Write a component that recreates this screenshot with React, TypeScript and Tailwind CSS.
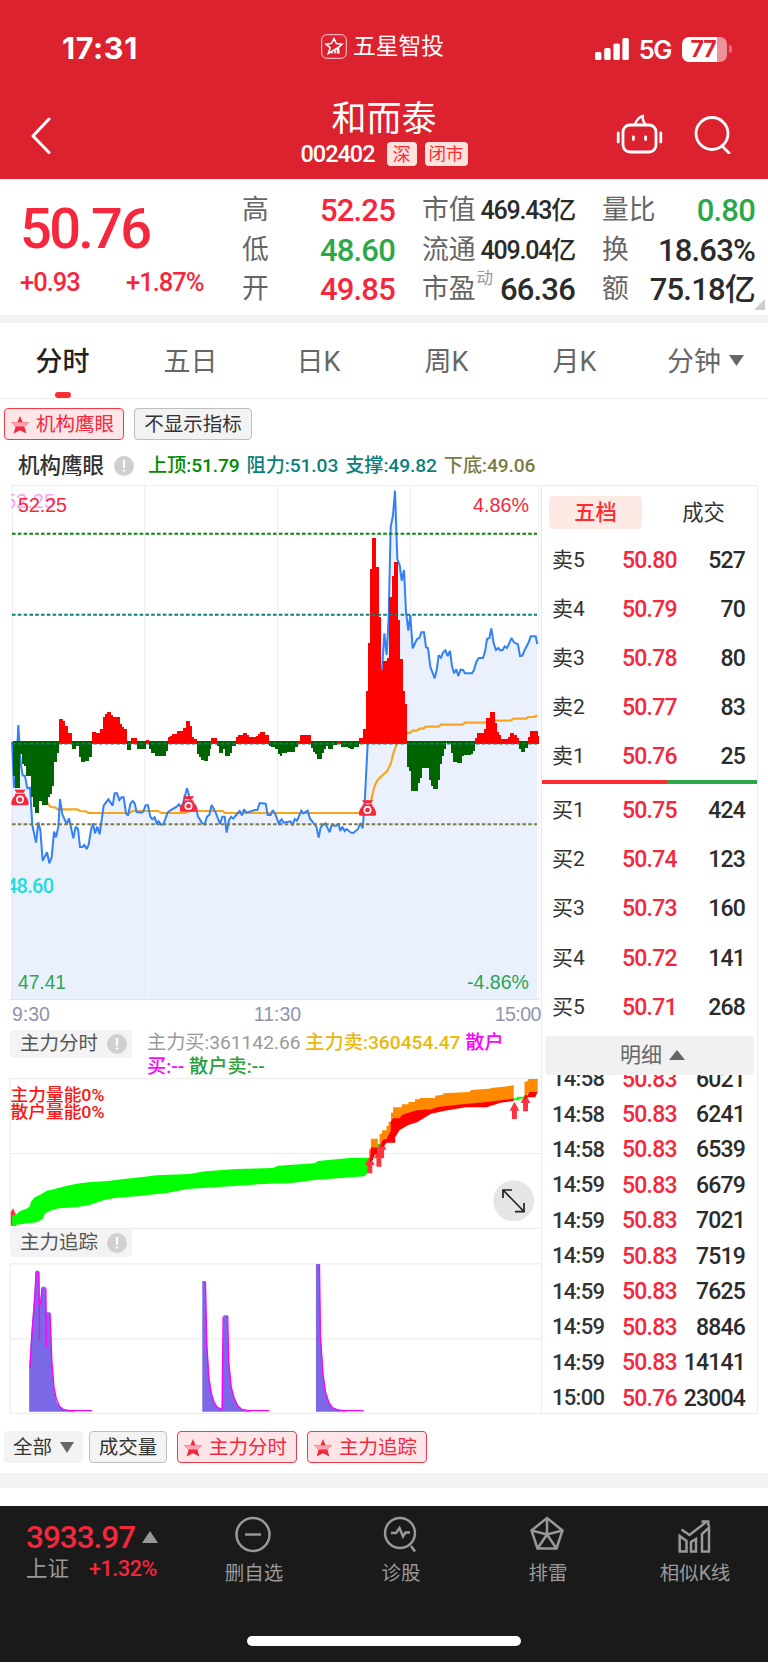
import { clsx } from "clsx";
import type { ReactNode } from "react";

type Quote = { label: string; value: string; tone: "up" | "down" | "flat"; small?: boolean; sup?: string };

const QUOTES: Quote[][] = [
  [
    { label: "高", value: "52.25", tone: "up" },
    { label: "低", value: "48.60", tone: "down" },
    { label: "开", value: "49.85", tone: "up" },
  ],
  [
    { label: "市值", value: "469.43亿", tone: "flat", small: true },
    { label: "流通", value: "409.04亿", tone: "flat", small: true },
    { label: "市盈", value: "66.36", tone: "flat", sup: "动" },
  ],
  [
    { label: "量比", value: "0.80", tone: "down" },
    { label: "换", value: "18.63%", tone: "flat" },
    { label: "额", value: "75.18亿", tone: "flat" },
  ],
];

const TABS = ["分时", "五日", "日K", "周K", "月K"];

const ASKS = [
  ["卖5", "50.80", "527"],
  ["卖4", "50.79", "70"],
  ["卖3", "50.78", "80"],
  ["卖2", "50.77", "83"],
  ["卖1", "50.76", "25"],
];

const BIDS = [
  ["买1", "50.75", "424"],
  ["买2", "50.74", "123"],
  ["买3", "50.73", "160"],
  ["买4", "50.72", "141"],
  ["买5", "50.71", "268"],
];

const TRADES = [
  ["14:58", "50.83", "6021"],
  ["14:58", "50.83", "6241"],
  ["14:58", "50.83", "6539"],
  ["14:59", "50.83", "6679"],
  ["14:59", "50.83", "7021"],
  ["14:59", "50.83", "7519"],
  ["14:59", "50.83", "7625"],
  ["14:59", "50.83", "8846"],
  ["14:59", "50.83", "14141"],
  ["15:00", "50.76", "23004"],
];

// Morning and afternoon halves are plotted at 3x. Each bar is [x, y], running
// to the x of the next one; y equal to the base means no bar.
const AM_BASE = 369;
const AM_BARS: [number, number][] = [
  [38, 468], [46, 503], [59, 402], [65, 432], [72, 438], [79, 468], [92, 530], [98, 560], [105, 580],
  [118, 542], [125, 555], [144, 530], [151, 521], [157, 499], [163, 427], [170, 398], [177, 297],
  [190, 302], [196, 317], [203, 338], [216, 388], [229, 379], [236, 412], [242, 427], [255, 424],
  [268, 412], [275, 336], [288, 338], [301, 327], [308, 291], [315, 281], [321, 275], [334, 286],
  [340, 291], [360, 313], [367, 320], [373, 327], [380, 390], [393, 354], [412, 388], [439, 361],
  [446, 387], [452, 399], [465, 408], [498, 393], [505, 352], [511, 348], [517, 343], [524, 341],
  [531, 333], [550, 324], [557, 304], [570, 318], [577, 350], [583, 356], [590, 401], [596, 412],
  [603, 421], [613, 424], [623, 408], [629, 387], [634, 355], [650, 379], [656, 398], [669, 388],
  [676, 408], [689, 399], [695, 379], [709, 352], [715, 345], [728, 339], [741, 345], [748, 352],
  [768, 347], [774, 343], [781, 336], [794, 344], [806, 379], [813, 382], [826, 388], [833, 402],
  [839, 408], [843, 408],
];

const PM_BASE = 819;
const PM_BARS: [number, number][] = [
  [0, 858], [6, 850], [20, 845], [46, 830], [54, 812], [60, 795], [92, 833], [98, 845], [105, 852],
  [112, 866], [125, 848], [131, 838], [138, 827], [144, 838], [158, 825], [170, 812], [183, 832],
  [203, 835], [209, 838], [223, 832], [236, 803], [249, 776], [257, 663], [263, 520], [269, 297],
  [276, 204], [289, 291], [296, 441], [302, 600], [309, 572], [322, 563], [328, 380], [335, 317],
  [341, 275], [355, 450], [361, 566], [368, 664], [374, 703], [381, 892], [388, 903], [394, 962],
  [400, 964], [413, 940], [420, 924], [427, 895], [446, 930], [453, 948], [459, 957], [473, 930],
  [479, 883], [486, 858], [492, 838], [499, 819], [513, 848], [519, 875], [532, 878], [545, 857],
  [552, 855], [572, 851], [578, 843], [585, 805], [592, 789], [612, 778], [618, 743], [631, 726],
  [644, 758], [651, 787], [658, 795], [664, 806], [683, 801], [690, 788], [703, 795], [710, 804],
  [716, 838], [722, 846], [736, 833], [743, 800], [749, 784], [775, 797], [778, 797],
];

const AM_PRICE =
  "36,365 42,500 46,500 55,315 62,430 68,466 75,468 82,505 90,503 97,615 108,668 115,607 121,630 128,722 141,697 148,730 155,712 162,635 168,652 175,620 180,537 187,583 200,612 207,595 220,655 227,620 234,627 240,681 247,681 253,675 260,687 266,674 273,630 279,610 285,640 292,620 299,643 311,557 325,538 338,557 344,520 351,520 358,540 365,532 371,532 378,580 384,587 391,552 398,543 404,550 410,576 424,578 430,574 437,556 444,556 451,590 457,598 464,592 470,610 476,604 483,614 490,613 503,578 510,572 530,560 537,553 545,565 561,505 568,530 576,550 588,562 594,590 607,610 614,613 621,590 628,585 635,555 648,580 660,612 667,590 674,590 680,638 687,600 693,590 700,596 706,588 719,573 726,586 732,568 739,578 765,570 772,570 779,549 797,551 803,585 812,585 818,570 825,580 838,615 840,602";
const PM_PRICE =
  "0,1052 5,1048 10,1058 32,1054 38,1066 44,1047 51,1052 64,1022 70,1030 83,1022 90,1046 103,1062 109,1070 116,1103 122,1072 129,1065 136,1060 149,1087 155,1065 168,1068 175,1060 181,1083 187,1070 194,1083 200,1077 213,1088 220,1089 234,1077 241,1059 248,1075 254,1000 263,820 275,700 300,620 306,600 313,490 320,555 326,440 332,172 339,135 345,62 352,268 359,285 365,332 372,300 378,425 385,482 391,435 398,535 404,522 411,507 418,504 424,487 432,487 438,532 444,534 451,590 464,625 470,600 476,556 483,563 489,548 496,541 503,558 510,543 516,588 522,610 529,598 535,618 542,599 549,600 555,610 576,610 582,600 589,576 596,564 609,564 615,545 621,507 628,504 634,475 641,520 648,540 655,534 661,541 668,540 674,529 681,534 687,522 694,504 702,517 714,523 720,558 727,557 734,540 746,517 752,499 767,499 772,522";

function Bars({ bars, base }: { bars: [number, number][]; base: number }) {
  return (
    <g shapeRendering="crispEdges">
      {bars.slice(0, -1).map(([x, y], i) => {
        const w = bars[i + 1][0] - x;
        return y < base ? (
          <rect key={x} x={x} y={y} width={w} height={base - y + 2} fill="#ff0000" />
        ) : (
          <rect key={x} x={x} y={base - 5} width={w} height={Math.max(y - base, 0) + 5} fill="#006400" />
        );
      })}
    </g>
  );
}

function MoneyBag({ x, y }: { x: number; y: number }) {
  return (
    <g transform={`translate(${x} ${y})`}>
      <path d="M-5.5-8.8Q-3-7.6 0-8.6Q3-7.6 5.5-8.8L3.6-5.2H-3.6Z" fill="#f5273d" />
      <path d="M-5-4.2H5V-2.6H-5Z" fill="#f5273d" />
      <path d="M-4.4-3H4.4C7.4-.6 8.6 2.4 8.7 5.4Q8.7 7.3 6.8 7.3H-6.8Q-8.7 7.3-8.7 5.4C-8.6 2.4-7.4-.6-4.4-3Z" fill="#f5273d" />
      <circle cy="1.6" r="3.2" fill="#f5273d" stroke="#fff" strokeWidth="1.6" />
    </g>
  );
}

function PriceChart() {
  return (
    <svg width="542" height="515" viewBox="0 485 542 515" className="block" fontFamily="Liberation Sans, Arial, sans-serif">
      <defs>
        <clipPath id="plot">
          <rect x="11" y="485" width="529" height="515" />
        </clipPath>
      </defs>
      <g clipPath="url(#plot)">
        <g transform="translate(0 620) scale(.33333)">
          <polygon points={`30,365 ${AM_PRICE} 840,1139 30,1139`} fill="#eaf1fd" />
        </g>
        <g transform="translate(280 470) scale(.33333)">
          <polygon points={`0,1589 ${PM_PRICE} 772,1589`} fill="#eaf1fd" />
        </g>
      </g>
      <path d="M12.5 485.5H539M144.7 485V999.5M277.5 485V999.5M410.5 485V999.5M539 485V999.5M12.5 485V999.5" stroke="#e3e8f5" strokeOpacity=".75" fill="none" />
      <path d="M10 999.5H539" stroke="#dde5f5" />
      <g fontSize="20">
        <text x="10" y="508" fill="#f9a3f5" clipPath="url(#plot)" dx="-5">52.25</text>
        <text x="18" y="512" fill="#f5273d" textLength="49" lengthAdjust="spacingAndGlyphs">52.25</text>
        <text x="473" y="512" fill="#f5273d" textLength="56" lengthAdjust="spacingAndGlyphs">4.86%</text>
        <text x="18" y="988.5" fill="#2ba455" textLength="48" lengthAdjust="spacingAndGlyphs">47.41</text>
        <text x="467" y="988.5" fill="#2ba455" textLength="62" lengthAdjust="spacingAndGlyphs">-4.86%</text>
      </g>
      <text x="6" y="893" fontSize="20" fill="#1fdce0" fontFamily="Roboto" fontWeight="500" clipPath="url(#plot)" textLength="48">48.60</text>
      <g clipPath="url(#plot)" fill="none" strokeLinejoin="round">
        <g transform="translate(0 620) scale(.33333)">
          <polyline points="140,545 147,555 153,561 166,562 173,568 232,568 240,573 258,574 266,579 390,579 397,573 475,573 483,579 555,579 570,573 668,573 675,579 842,579" stroke="#f9a41c" strokeWidth="6.5" />
          <polyline points={AM_PRICE} stroke="#3480f5" strokeWidth="6" strokeLinejoin="miter" strokeMiterlimit="2" />
          <Bars bars={AM_BARS} base={AM_BASE} />
        </g>
        <g transform="translate(280 470) scale(.33333)">
          <polyline points="0,1029 262,1029 272,1000 278,970 285,945 293,930 305,918 320,905 332,882 340,850 350,822 365,795 381,790 391,788 398,782 412,781 418,776 430,776 437,770 476,770 483,764 548,764 555,758 612,758 640,752 692,752 700,746 738,746 745,741 762,741 772,736" stroke="#f9a41c" strokeWidth="6.5" />
          <polyline points={PM_PRICE} stroke="#3480f5" strokeWidth="6" strokeLinejoin="miter" strokeMiterlimit="2" />
          <Bars bars={PM_BARS} base={PM_BASE} />
        </g>
        <g strokeWidth="2" strokeDasharray="3.6 2.2">
          <path d="M12 533.7H537" stroke="#008a00" />
          <path d="M12 614.7H537" stroke="#0d7f7b" />
          <path d="M12 743.8H537" stroke="#0d7f7b" strokeWidth="1.6" />
          <path d="M12 824.3H537" stroke="#7c7a45" />
        </g>
        <MoneyBag x={20} y={798} />
        <MoneyBag x={188.5} y={804.5} />
        <MoneyBag x={367.5} y={808.5} />
      </g>
    </svg>
  );
}

function UpArrow({ x, y }: { x: number; y: number }) {
  return <path transform={`translate(${x} ${y})`} d="M0 0L14 27H7V52H-7V27H-14Z" fill="#ff3340" />;
}

function FlowChart() {
  return (
    <svg width="542" height="151" viewBox="0 1078 542 151" className="block">
      <path d="M10 1078.7H541M10 1153.5H541M10 1228.3H541M10.2 1078V1229" stroke="#ededed" strokeWidth="1.2" />
      <g transform="translate(0 1060) scale(.34758 .33333)">
        <path d="M31 455L38 445L46 465V497H31Z" fill="#ff3340" />
        <polygon
          points="35,467 45,465 50,460 60,452 75,447 85,440 90,424 100,412 118,403 135,392 155,388 170,383 190,378 220,371 255,367 310,363 350,358 410,351 450,346 545,342 590,334 680,327 785,324 800,317 905,310 915,303 1005,294 1064,293 1064,318 1058,340 1048,349 990,353 900,361 840,369 740,373 620,382 540,387 480,399 400,408 330,414 300,420 260,434 220,442 170,445 150,450 130,460 122,478 105,487 80,490 48,494 46,498 35,498"
          fill="#00ff00"
        />
        <UpArrow x={1064} y={288} />
        <polygon points="1062,268 1067,268 1067,236 1087,236 1087,262 1067,262 1067,296 1062,296" fill="#ff8a00" />
        <polygon points="1067,262 1087,262 1087,280 1078,285 1073,300 1064,305" fill="#ff0000" />
        <rect x="1086" y="252" width="9" height="14" fill="#00ff00" />
        <UpArrow x={1090} y={268} />
        <UpArrow x={1098} y={242} />
        <polygon
          points="1092,255 1092,222 1099,222 1099,211 1112,211 1112,198 1118,198 1118,185 1125,185 1125,158 1131,158 1131,142 1156,142 1156,133 1175,133 1175,126 1194,126 1194,118 1207,118 1207,114 1252,114 1252,107 1275,104 1275,100 1350,96 1356,90 1406,86 1418,83 1450,80 1478,76 1478,115 1440,122 1330,134 1240,148 1200,155 1156,168 1150,176 1130,178 1130,200 1118,228 1108,240 1100,240"
          fill="#ff8a00"
        />
        <polygon
          points="1095,262 1100,240 1112,236 1124,212 1124,185 1131,175 1150,175 1156,165 1175,158 1200,151 1240,148 1260,141 1330,133 1400,126 1440,121 1478,115 1478,123 1440,128 1400,142 1340,142 1280,152 1240,161 1200,187 1175,195 1150,210 1137,232 1137,248 1112,248 1105,258"
          fill="#ff0000"
        />
        <path d="M1478 118H1490V113H1510" stroke="#00ff00" strokeWidth="6" fill="none" />
        <UpArrow x={1480} y={125} />
        <UpArrow x={1512} y={102} />
        <polygon points="1509,106 1509,66 1520,62 1520,57 1547,57 1547,95 1522,95 1515,106" fill="#ff8a00" />
        <polygon points="1522,95 1547,95 1540,112 1515,112 1509,122 1509,106 1518,106" fill="#ff0000" />
      </g>
      <g fontFamily="Roboto, Noto Sans CJK SC, sans-serif" fontSize="17.4" fill="#ff1414" fontWeight="500">
        <text x="10.5" y="1101" textLength="94" lengthAdjust="spacingAndGlyphs">主力量能0%</text>
        <text x="10.5" y="1117.5" textLength="94" lengthAdjust="spacingAndGlyphs">散户量能0%</text>
      </g>
      <circle cx="513.7" cy="1200.7" r="20.5" fill="#e6e6e6" />
      <path d="M503 1190L524 1211.5M503 1198V1190H512M515 1211.7H524V1203" stroke="#222" strokeWidth="1.7" fill="none" />
    </svg>
  );
}

function TrackChart() {
  return (
    <svg width="542" height="151" viewBox="0 1263 542 151" className="block">
      <path d="M10 1263.8H541M10 1338.8H541M10 1413.4H541M10.2 1263V1414" stroke="#ededed" strokeWidth="1.2" />
      <g transform="translate(0 1225) scale(.34758 .33333)">
        <g fill="#7a68e6">
          <polygon points="84,560 84,430 90,325 98,220 103,137 112,137 115,240 120,185 131,185 134,262 144,262 149,405 155,485 162,530 172,545 182,553 215,557 215,560" />
          <polygon points="582,560 582,168 591,168 596,360 602,460 609,505 616,530 625,545 638,553 643,271 655,271 658,410 666,485 674,515 684,540 695,552 720,557 720,560" />
          <polygon points="909,560 909,117 919,117 923,335 930,445 937,500 946,530 956,547 970,554 995,557 995,560" />
        </g>
        <g fill="none" stroke="#ff00ff" strokeWidth="4">
          <path d="M86 430L92 325L100 218L104 140M112 140L114 345M116 240L121 190M132 190L133 367M144 264L149 405L155 485L162 522L172 545L182 553L200 557H265" />
          <path d="M591 170L595 360L601 460L608 505L616 532L625 547L639 553L642 275M655 273L658 410L665 485L673 518L684 543L695 553L715 557H775" />
          <path d="M919 118L922 335L929 445L936 500L946 532L956 548L970 554L990 557H1046" />
        </g>
      </g>
    </svg>
  );
}

function Star() {
  return (
    <svg width="18" height="18" viewBox="0 0 18 18">
      <path d="M9 0L11.6 6.2H18L13.4 10.8L15.4 17.5L9 14.2L2.6 17.5L4.6 10.8L0 6.2H6.4Z" fill="#f5273d" />
      <path d="M0 6.2H18L13.6 10.6H4.4Z" fill="#fda4ad" />
    </svg>
  );
}

function Info() {
  return (
    <span className="flex size-5 shrink-0 items-center justify-center rounded-full bg-[#d0d0d0]">
      <svg width="4" height="12" viewBox="0 0 4 12" fill="#fff">
        <path d="M.8 0H3.2L2.8 8H1.2Z" />
        <circle cx="2" cy="10.6" r="1.2" />
      </svg>
    </span>
  );
}

function Chip({ children, active, className }: { children: ReactNode; active?: boolean; className?: string }) {
  return (
    <div
      className={clsx(
        "flex h-8 items-center rounded border pt-px text-[19.5px] leading-none whitespace-nowrap",
        active ? "border-[#f5394a] bg-[#fee5e8] pl-[6px] text-[#f5273d]" : "justify-center border-[#bfbfbf] bg-[#f3f3f3] text-[#333]",
        className,
      )}
    >
      {active && <Star />}
      <span className={active ? "ml-[7px]" : ""}>{children}</span>
    </div>
  );
}

function PanelLabel({ children }: { children: string }) {
  return (
    <div className="ml-[10px] flex h-[28px] w-[122px] shrink-0 items-center gap-[9px] rounded bg-[#f3f3f3] pl-[10px] text-[19.5px] leading-none text-[#555]">
      {children}
      <Info />
    </div>
  );
}

function BookRow({ row, timed, className }: { row: string[]; timed?: boolean; className: string }) {
  return (
    <div className={clsx("flex shrink-0 items-center pr-[12px] pl-[10px] text-[23px] leading-none font-medium tracking-[-0.8px]", className)}>
      <span className={clsx("w-[70px] text-[#333]", timed ? "text-[22px] tracking-[-0.7px]" : "text-[21px] font-normal tracking-[-0.1px]")}>
        {row[0]}
      </span>
      <span className="text-[#f5273d]">{row[1]}</span>
      <span className="flex-1 text-right text-[#2b2b2b]">{row[2]}</span>
    </div>
  );
}

function NavItem({ label, children }: { label: string; children: ReactNode }) {
  return (
    <div className="flex w-[147px] flex-col items-center pt-[8px]">
      <svg width="40" height="40" viewBox="0 0 40 40" fill="none" stroke="#999" strokeWidth="2.5">
        {children}
      </svg>
      <span className="mt-[10px] ml-[3px] text-[19.5px] leading-none text-[#999]">{label}</span>
    </div>
  );
}

export default function App() {
  return (
    <div className="flex h-[1663px] w-[768px] flex-col overflow-hidden bg-white font-['Roboto','Noto_Sans_CJK_SC',sans-serif]">
      {/* Status bar + title */}
      <header className="h-[179px] shrink-0 bg-[#dc222f] text-white">
        <div className="grid h-24 grid-cols-[1fr_auto_1fr] items-center">
          <span className="pt-px pl-[62px] font-['Inter',sans-serif] text-[30.5px] leading-none font-bold tracking-[0.6px]">17:31</span>
          <div className="flex items-center gap-[6px] pr-[3px] pb-[3px]">
            <svg width="26" height="25" viewBox="0 0 26 25" fill="none" stroke="#fff">
              <rect x=".7" y=".7" width="24.6" height="23.6" rx="5" strokeWidth="1" strokeOpacity=".8" />
              <path d="M10.4 9.6L13 4.5L15.4 9.6L21 10.2L17.3 13.6L18 19.5M10.4 9.6L5 10.2L9.2 13.8L7.3 19.5L18.5 12.6M11 19.5V17M14 19.5V15.5M16.5 19.5V14.5" strokeWidth="1.5" />
            </svg>
            <span className="pt-px text-[22.8px] leading-none">五星智投</span>
          </div>
          <div className="flex items-center justify-end pt-[2px] pr-[36px]">
            <svg width="34" height="23" viewBox="0 0 34 23" fill="#fff">
              <rect y="14" width="6.4" height="8" rx="1.6" />
              <rect x="9.2" y="10" width="6.4" height="12" rx="1.6" />
              <rect x="18.4" y="5.5" width="6.4" height="16.5" rx="1.6" />
              <rect x="27.4" width="6.4" height="22" rx="1.6" />
            </svg>
            <span className="ml-[10px] pt-px font-['Inter',sans-serif] text-[25.5px] leading-none font-semibold tracking-[-1.4px]">5G</span>
            <div className="ml-[11px] flex h-[25px] w-[45px] items-center justify-center rounded-[7px] bg-[linear-gradient(to_right,#fff_78%,#ee919a_78%)]">
              <span className="pr-[3px] font-['Inter',sans-serif] text-[23px] leading-none font-bold tracking-[-1px] text-[#dc222f]">77</span>
            </div>
            <div className="ml-[2px] h-2 w-[3px] rounded-r bg-[#e8717b]" />
          </div>
        </div>
        <div className="grid h-[83px] grid-cols-[1fr_auto_1fr] items-start">
          <svg width="22" height="38" viewBox="0 0 22 38" className="mt-[21px] ml-[30px]" fill="none" stroke="#fff" strokeWidth="3" strokeLinecap="round" strokeLinejoin="round">
            <path d="M19 2L3 19L19 35.5" />
          </svg>
          <div className="flex flex-col items-center">
            <h1 className="mt-[6px] text-[35px] leading-[36px]">和而泰</h1>
            <div className="mt-[4px] flex h-6 items-center">
              <span className="pt-[2px] text-[23.5px] leading-none font-medium tracking-[-1px]">002402</span>
              <span className="ml-[12px] flex h-6 w-[30px] items-center justify-center rounded bg-[#ffe3dc] pt-px text-[18px] leading-none text-[#fb2d33]">深</span>
              <span className="ml-2 flex h-6 w-[43px] items-center justify-center rounded bg-[#ffe3dc] pt-px text-[17.5px] leading-none text-[#fb2d33]">闭市</span>
            </div>
          </div>
          <div className="mt-[18px] flex justify-end gap-[31px] pr-[37px]">
            <svg width="47" height="41" viewBox="0 0 47 41" fill="none" stroke="#fff" strokeWidth="2.8" strokeLinecap="round">
              <rect x="7" y="11" width="33" height="27" rx="7" />
              <path d="M19 10.5C20.5 6 23 3 27 1.8C26.2 4.8 27 7.5 29.5 10.5" strokeWidth="2.4" strokeLinejoin="round" />
              <path d="M2.2 19V28M44.8 19V28" />
              <path d="M17.4 23V25.5M29.6 23V25.5" />
            </svg>
            <svg width="37" height="40" viewBox="0 0 37 40" fill="none" stroke="#fff" strokeWidth="2.8" strokeLinecap="round">
              <circle cx="18" cy="19.5" r="16" />
              <path d="M28 32L35 39" />
            </svg>
          </div>
        </div>
      </header>

      {/* Quote summary */}
      <section className="relative flex h-[136px] shrink-0 pt-[12px]">
        <div className="w-[242px] pl-[20px] font-medium text-[#f5273d]">
          <div className="mt-[10px] text-[56px] leading-[56px] tracking-[-2.7px]">50.76</div>
          <div className="mt-[13px] text-[25.5px] leading-none tracking-[-1px]">
            <span className="inline-block w-[106px]">+0.93</span>
            <span>+1.87%</span>
          </div>
        </div>
        <div className="flex gap-[27px]">
          {QUOTES.map((col, i) => (
            <div key={i} className="w-[153px]">
              {col.map((q) => (
                <div key={q.label} className="flex h-[39.5px] items-center text-[26.8px] leading-none text-[#666]">
                  {q.label}
                  {q.sup && <sup className="top-[-11px] ml-[1px] text-[16.5px] leading-none text-[#999]">{q.sup}</sup>}
                  <span
                    className={clsx(
                      "flex-1 text-right font-medium whitespace-nowrap",
                      q.small ? "text-[25px] tracking-[-1.2px]" : "text-[31px] tracking-[-0.8px]",
                      q.tone === "up" && "text-[#f5273d]",
                      q.tone === "down" && "text-[#2ca84a]",
                      q.tone === "flat" && "text-[#2b2b2b]",
                    )}
                  >
                    {q.value}
                  </span>
                </div>
              ))}
            </div>
          ))}
        </div>
        <svg width="11" height="11" className="absolute right-[3px] bottom-[5px]">
          <path d="M11 0V11H0Z" fill="#ccc" />
        </svg>
      </section>
      <div className="h-2 shrink-0 bg-[#f3f3f3]" />

      {/* Period tabs */}
      <nav className="flex h-[76px] shrink-0 border-b border-[#ededed] text-[27px] leading-none text-[#666]">
        {TABS.map((tab, i) => (
          <div key={tab} className={clsx("flex flex-1 flex-col items-center pt-[26px]", i === 0 ? "font-medium text-[#222]" : "pl-[3px]")}>
            {tab}
            {i === 0 && <span className="mt-[16px] h-[6px] w-4 rounded-[3px] bg-[#fb2d33]" />}
          </div>
        ))}
        <div className="flex flex-1 items-start justify-center gap-[8px] pt-[26px] pl-[6px]">
          分钟
          <svg width="15" height="11" className="mt-[6px]">
            <path d="M0 0H15L7.5 11Z" fill="#666" />
          </svg>
        </div>
      </nav>

      {/* Indicator chips and readings */}
      <div className="flex h-[41px] shrink-0 gap-[10px] pt-[9px] pl-[4px]">
        <Chip active className="w-[120px]">机构鹰眼</Chip>
        <Chip className="w-[118px]">不显示指标</Chip>
      </div>
      <div className="flex h-[45px] shrink-0 items-center pt-[6px] pl-[18px] leading-none whitespace-nowrap">
        <span className="text-[21.5px] font-medium text-[#333]">机构鹰眼</span>
        <span className="mr-[14px] ml-[10px]"><Info /></span>
        <div className="flex gap-[7px] pt-px text-[19.2px] font-medium tracking-[-0.1px]">
          <span className="text-[#008a00]">上顶:51.79</span>
          <span className="text-[#0d7f7b]">阻力:51.03</span>
          <span className="text-[#0d7f7b]">支撑:49.82</span>
          <span className="text-[#7c7a45]">下底:49.06</span>
        </div>
      </div>

      <main className="flex h-[929px] shrink-0">
        <div className="w-[541px] shrink-0">
          <PriceChart />
          <div className="flex h-[30px] items-center justify-between pl-[12px] font-['Liberation_Sans',Arial,sans-serif] text-[19.5px] leading-none text-[#9095ab]">
            <span className="w-[60px]">9:30</span>
            <span>11:30</span>
            <span className="w-[58px] text-right tracking-[-0.5px]">15:00</span>
          </div>
          <div className="flex h-[48px]">
            <PanelLabel>主力分时</PanelLabel>
            <p className="ml-[15px] w-[372px] pt-px text-[19.2px] leading-[24px] font-medium">
              <span className="font-normal text-[#999]">主力买:361142.66</span> <span className="text-[#e8b90c]">主力卖:360454.47</span>{" "}
              <span className="text-[#ff00ff]">散户<br />买:--</span> <span className="text-[#2ba03f]">散户卖:--</span>
            </p>
          </div>
          <FlowChart />
          <div className="h-[34px]">
            <PanelLabel>主力追踪</PanelLabel>
          </div>
          <TrackChart />
        </div>

        {/* Order book */}
        <aside className="flex w-[217px] flex-col overflow-hidden border border-[#ebebeb]">
          <div className="mt-[10px] flex h-[33px] shrink-0 pl-[7px] text-[21.3px] leading-none">
            <span className="flex w-[93px] items-center justify-center rounded bg-[#feeae5] font-medium text-[#fb2d33]">五档</span>
            <span className="ml-[15px] flex w-[93px] items-center justify-center text-[#333]">成交</span>
          </div>
          <div className="mt-[5px]">
            {ASKS.map((row) => (
              <BookRow key={row[0]} row={row} className="h-[49.2px] pt-[3px]" />
            ))}
          </div>
          <div className="flex h-[4px] shrink-0">
            <div className="w-[125px] bg-[#fb2d33]" />
            <div className="flex-1 bg-[#2ca84a]" />
          </div>
          <div className="mt-[1px]">
            {BIDS.map((row) => (
              <BookRow key={row[0]} row={row} className="h-[49.2px] pt-[2px]" />
            ))}
          </div>
          <div className="z-10 mx-[3px] mt-[5px] flex h-[39px] shrink-0 items-center justify-center gap-[7px] rounded bg-[#f1f1f1] pl-[6px] text-[21px] leading-none text-[#666]">
            明细
            <svg width="16" height="10">
              <path d="M0 10H16L8 0Z" fill="#666" />
            </svg>
          </div>
          <div className="-mt-[14px]">
            {TRADES.map((row, i) => (
              <BookRow key={i} row={row} timed className="h-[35.45px] pt-px" />
            ))}
          </div>
        </aside>
      </main>

      <div className="flex h-[59px] shrink-0 pt-[17px] pl-[4px]">
        <Chip className="w-[79px] border-transparent">
          <span className="flex items-center gap-[8px]">
            全部
            <svg width="14" height="11"><path d="M0 0H14L7 11Z" fill="#666" /></svg>
          </span>
        </Chip>
        <Chip className="ml-[6px] w-[78px]">成交量</Chip>
        <Chip active className="ml-[10px] w-[120px]">主力分时</Chip>
        <Chip active className="ml-[10px] w-[120px]">主力追踪</Chip>
      </div>
      <div className="h-[15px] shrink-0 bg-[#f3f3f3]" />

      {/* Bottom bar */}
      <footer className="mt-[18px] flex h-[156px] shrink-0 flex-col bg-[#1a1a1a]">
        <div className="flex h-[130px] pl-[26px]">
          <div className="w-[153px] shrink-0 pt-[16px] font-medium text-[#f5273d]">
            <div className="flex items-center gap-[7px] text-[31.5px] leading-[32px] tracking-[-1px]">
              3933.97
              <svg width="16" height="12" className="mb-[3px]"><path d="M0 12H16L8 0Z" fill="#999" /></svg>
            </div>
            <div className="mt-[3px] flex items-center text-[21.5px] leading-[23px]">
              <span className="font-normal text-[#999]">上证</span>
              <span className="ml-[20px] tracking-[-0.4px]">+1.32%</span>
            </div>
          </div>
          <NavItem label="删自选">
            <circle cx="20" cy="20.5" r="16.5" />
            <path d="M12 20.5H28" />
          </NavItem>
          <NavItem label="诊股">
            <circle cx="20" cy="19" r="15" />
            <path d="M11 19H16L19.5 14L23 22.5L25.5 18.5H30M31 32L35 37.5" />
          </NavItem>
          <NavItem label="排雷">
            <path d="M20 4L35.5 16.5L29.5 34.5H10.5L4.5 16.5Z" />
            <path d="M20 4V20.5M4.5 16.5L20 20.5L35.5 16.5M10.5 34.5L20 20.5L29.5 34.5" />
          </NavItem>
          <NavItem label="相似K线">
            <path d="M5.7 37.5V22L12.5 27V37.5ZM17 37.5V28L22 25V37.5ZM28 37.5V20L35 13.5V37.5Z" />
            <path d="M7.5 15.5L15.5 21L33.5 7M27.5 7.5H34.3V12" />
          </NavItem>
        </div>
        <div className="mx-auto h-[10px] w-[274px] shrink-0 rounded-full bg-white" />
      </footer>
    </div>
  );
}
